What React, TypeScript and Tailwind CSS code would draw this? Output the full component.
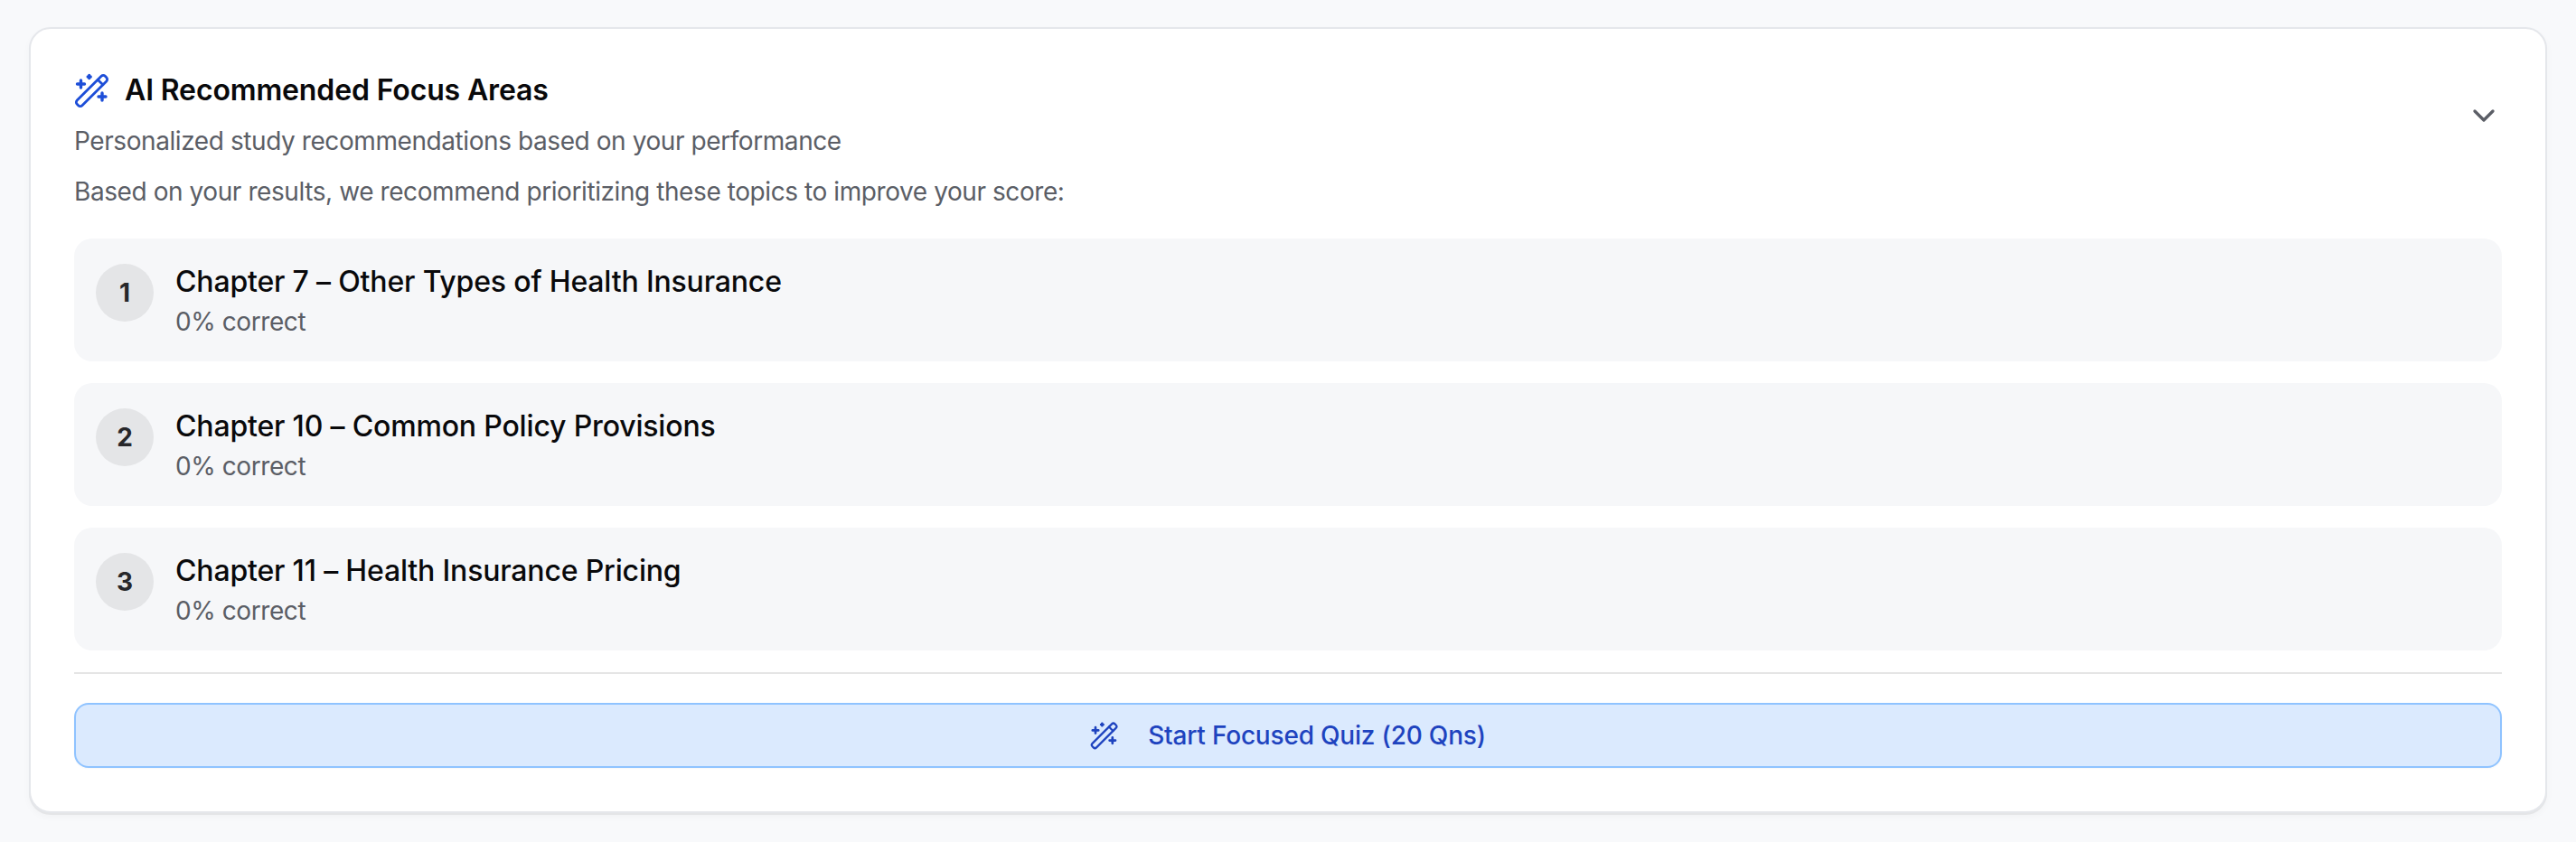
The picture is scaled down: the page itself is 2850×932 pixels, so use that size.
import { ChevronDown } from "lucide-react";

const topics = [
  { rank: 1, title: "Chapter 7 – Other Types of Health Insurance" },
  { rank: 2, title: "Chapter 10 – Common Policy Provisions" },
  { rank: 3, title: "Chapter 11 – Health Insurance Pricing" },
];

function WandIcon({ className }: { className?: string }) {
  return (
    <svg viewBox="0 0 40 40" fill="none" stroke="currentColor" strokeWidth={2.8} strokeLinecap="round" strokeLinejoin="round" className={className}>
      <g transform="translate(19.5 20.5) rotate(-45)">
        <rect x={-22} y={-4} width={44} height={8} rx={3} />
        <path d="M13.4 -4V4" />
      </g>
      <path d="M7.5 9v8M3.5 13h8" strokeWidth={3.4} />
      <path d="M16.7 3.5v3M15.2 5h3" strokeWidth={3.4} />
      <path d="M31 23v8M27 27h8" strokeWidth={3.4} />
    </svg>
  );
}

export default function App() {
  return (
    <div className="min-h-[932px] bg-[#f8f9fb] px-8 pt-[30px] font-['Inter',sans-serif]">
      <div className="rounded-[24px] border-2 border-[#e5e7eb] bg-white p-[48px] shadow-[0_2px_0_#e4e5e7,0_4px_8px_rgba(0,0,0,0.03)]">
        <div className="flex items-center justify-between">
          <div>
            <div className="flex items-center gap-[16px]">
              <WandIcon className="h-[40px] w-[40px] text-[#1d4ed8]" />
              <h2 className="text-[32px] leading-[40px] font-semibold tracking-[-0.14px] text-[#09090b]">AI Recommended Focus Areas</h2>
            </div>
            <p className="mt-[16px] text-[28px] leading-[40px] tracking-[-0.42px] text-[#5b5e66]">Personalized study recommendations based on your performance</p>
          </div>
          <ChevronDown className="h-[40px] w-[40px] text-[#5b5e66]" />
        </div>
        <p className="mt-[16px] text-[28px] leading-[40px] tracking-[-0.42px] text-[#5b5e66]">Based on your results, we recommend prioritizing these topics to improve your score:</p>
        <div className="mt-[32px] flex flex-col gap-[24px]">
          {topics.map((t) => (
            <div key={t.rank} className="flex h-[136px] items-start gap-[24px] rounded-[20px] bg-[#f6f7f9] px-[24px] pt-[24px]">
              <div className="mt-[4px] flex h-[64px] w-[64px] items-center justify-center rounded-full bg-[#e4e5e7] text-[28px] font-bold text-[#27272a]">{t.rank}</div>
              <div className="mt-[2px]">
                <div className="text-[32px] leading-[44px] font-medium tracking-[-0.17px] text-[#09090b]">{t.title}</div>
                <div className="text-[28px] leading-[44px] tracking-[-0.42px] text-[#5b5e66]">0% correct</div>
              </div>
            </div>
          ))}
        </div>
        <div className="mt-[24px] h-[2px] bg-[#e5e5e5]" />
        <button className="mt-[32px] flex h-[72px] w-full items-center justify-center gap-[32px] rounded-[16px] border-2 border-[#8fc3ff] bg-[#dbeafe] text-[28px] font-medium tracking-[-0.2px] text-[#1e43bf] shadow-[0_1px_2px_rgba(0,0,0,0.03)]">
          <WandIcon className="h-[32px] w-[32px]" />
          Start Focused Quiz (20 Qns)
        </button>
      </div>
    </div>
  );
}
